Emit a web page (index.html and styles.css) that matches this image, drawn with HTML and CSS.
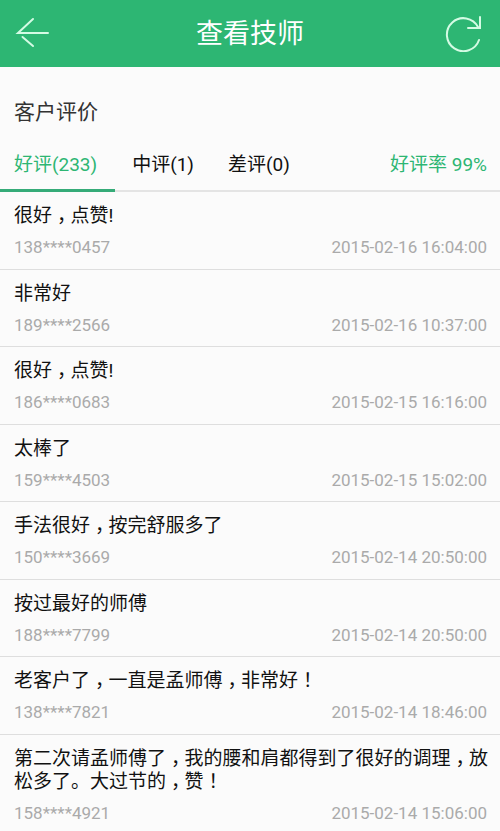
FILE: index.html
```html
<!DOCTYPE html>
<html lang="zh-CN">
<head>
<meta charset="utf-8">
<meta name="viewport" content="width=device-width, initial-scale=1">
<title>查看技师</title>
<link rel="stylesheet" href="styles.css">
</head>
<body>
<header class="bar">
  <button class="icon-btn" type="button" aria-label="返回">
    <svg width="40" height="36" viewBox="0 0 40 36"><path d="M33 17H3L18 3M7.500 21L18 30"/></svg>
  </button>
  <h1 class="bar-title">查看技师</h1>
  <button class="icon-btn" type="button" aria-label="刷新">
    <svg width="40" height="36" viewBox="0 0 40 36"><path d="M34 24A16.500 16.500 0 1 1 33 11M35 1V12H23"/></svg>
  </button>
</header>
<main>
  <h2 class="section-title">客户评价</h2>
  <div class="filter">
    <nav class="tabs" role="tablist">
      <button class="tab active" type="button" role="tab" aria-selected="true">好评(233)</button>
      <button class="tab" type="button" role="tab" aria-selected="false">中评(1)</button>
      <button class="tab" type="button" role="tab" aria-selected="false">差评(0)</button>
    </nav>
    <p class="rate">好评率 99%</p>
  </div>
  <ul class="reviews">
    <li class="review">
      <p class="message">很好<span class="mark">，</span>点赞!</p>
      <div class="meta"><span>138****0457</span><time>2015-02-16 16:04:00</time></div>
    </li>
    <li class="review">
      <p class="message">非常好</p>
      <div class="meta"><span>189****2566</span><time>2015-02-16 10:37:00</time></div>
    </li>
    <li class="review">
      <p class="message">很好<span class="mark">，</span>点赞!</p>
      <div class="meta"><span>186****0683</span><time>2015-02-15 16:16:00</time></div>
    </li>
    <li class="review">
      <p class="message">太棒了</p>
      <div class="meta"><span>159****4503</span><time>2015-02-15 15:02:00</time></div>
    </li>
    <li class="review">
      <p class="message">手法很好<span class="mark">，</span>按完舒服多了</p>
      <div class="meta"><span>150****3669</span><time>2015-02-14 20:50:00</time></div>
    </li>
    <li class="review">
      <p class="message">按过最好的师傅</p>
      <div class="meta"><span>188****7799</span><time>2015-02-14 20:50:00</time></div>
    </li>
    <li class="review">
      <p class="message">老客户了<span class="mark">，</span>一直是孟师傅<span class="mark">，</span>非常好<span class="mark">！</span></p>
      <div class="meta"><span>138****7821</span><time>2015-02-14 18:46:00</time></div>
    </li>
    <li class="review">
      <p class="message">第二次请孟师傅了<span class="mark">，</span>我的腰和肩都得到了很好的调理<span class="mark">，</span>放松多了。大过节的<span class="mark">，</span>赞<span class="mark">！</span></p>
      <div class="meta"><span>158****4921</span><time>2015-02-14 15:06:00</time></div>
    </li>
  </ul>
</main>
</body>
</html>
```
FILE: styles.css
```css
* {
  box-sizing: border-box;
}

body {
  margin: 0;
  background: #fbfbfb;
  color: #111;
  font-family: Roboto, "Noto Sans CJK SC", sans-serif;
  font-size: 19px;
}

h1, h2, p, ul {
  margin: 0;
  padding: 0;
  font-weight: 400;
}

button {
  border: 0;
  padding: 0;
  background: none;
  color: inherit;
  font: inherit;
  cursor: pointer;
}

.bar {
  display: flex;
  align-items: center;
  justify-content: space-between;
  height: 67px;
  padding: 0 15px;
  background: #2db673;
  color: #fff;
}

.bar-title {
  font-size: 27px;
  line-height: 36px;
}

.icon-btn {
  display: flex;
}

.icon-btn svg {
  fill: none;
  stroke: #d4fbe4;
  stroke-width: 2;
  stroke-linecap: round;
}

.section-title {
  padding: 29px 14px 0;
  color: #333;
  font-size: 21px;
  line-height: 32px;
}

.filter {
  display: flex;
  align-items: stretch;
  justify-content: space-between;
  height: 64px;
  padding-right: 13px;
  border-bottom: 2px solid #e4e4e4;
}

.tabs {
  display: flex;
  margin-bottom: -2px;
}

.tab {
  padding: 23px 17px 10px;
  border-bottom: 3px solid transparent;
  line-height: 28px;
}

.tab:first-child {
  padding: 23px 18px 10px 14px;
}

.tab.active {
  border-bottom-color: #35ab78;
  color: #2db673;
}

.rate {
  padding-top: 23px;
  color: #2db673;
  line-height: 28px;
}

.reviews {
  list-style: none;
}

.review {
  padding: 12px 8px 10px 14px;
  border-bottom: 1px solid #dedede;
}

/* Alternate rows are a touch tighter. */
.review:nth-child(even) {
  padding-bottom: 9px;
}

.message {
  line-height: 23px;
}

/* Half-width form of the punctuation, padded so it sits mid-cell. */
.mark {
  padding: 0 4px 0 5px;
  font-family: "Noto Sans CJK SC", sans-serif;
  font-feature-settings: "halt";
  line-height: 1;
}

.meta {
  display: flex;
  justify-content: space-between;
  padding: 8px 5px 0 0;
  color: #aaa;
  font-size: 17px;
  line-height: 24px;
}
```
